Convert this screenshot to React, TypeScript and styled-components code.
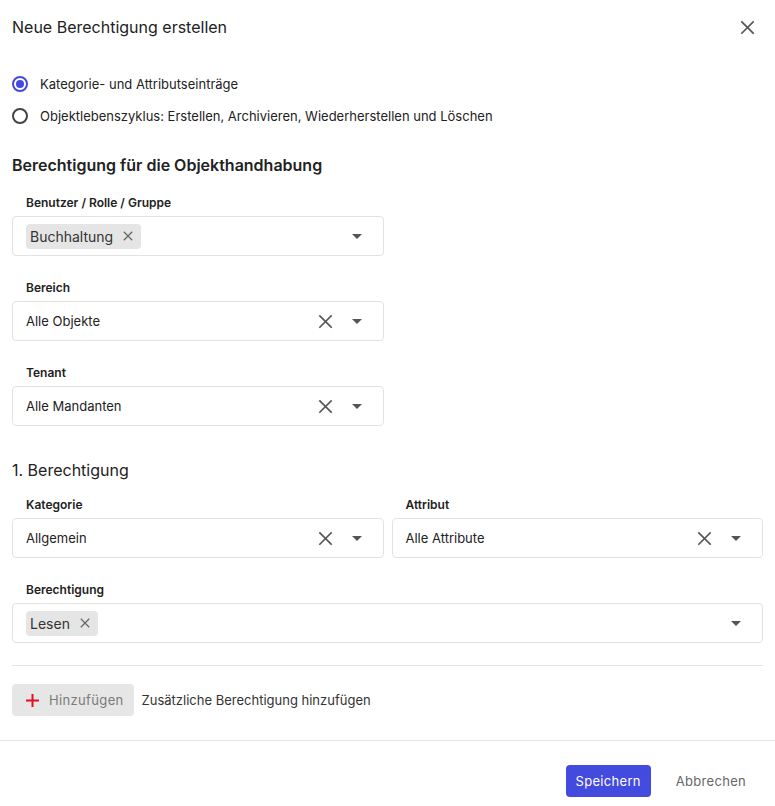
import React from 'react';
import styled, { createGlobalStyle } from 'styled-components';

const GlobalStyle = createGlobalStyle`
  html, body {
    margin: 0;
    padding: 0;
    background: #ffffff;
    font-family: Inter, "Noto Sans", sans-serif;
    color: #222;
  }
  * { box-sizing: border-box; }
`;

const Dialog = styled.div`
  width: 775px;
  height: 806px;
  display: flex;
  flex-direction: column;
  background: #fff;
`;

const Header = styled.div`
  height: 54px;
  padding: 0 20px 0 12px;
  display: flex;
  align-items: center;
  justify-content: space-between;
`;

const Title = styled.h2`
  margin: 0;
  font-size: 16px;
  font-weight: 400;
  color: #222;
`;

const IconButton = styled.button`
  border: none;
  background: none;
  padding: 0;
  width: 16px;
  height: 16px;
  display: flex;
  align-items: center;
  justify-content: center;
  cursor: pointer;
`;

const Body = styled.div`
  padding: 14px 12px 0;
  display: flex;
  flex-direction: column;
`;

const RadioGroup = styled.div`
  display: flex;
  flex-direction: column;
`;

const RadioRow = styled.label`
  height: 32px;
  display: flex;
  align-items: center;
  gap: 12px;
  font-size: 13px;
  color: #222;
  cursor: pointer;
`;

const RadioCircle = styled.span<{ $checked?: boolean }>`
  width: 16px;
  height: 16px;
  border-radius: 50%;
  border: 2px solid ${({ $checked }) => ($checked ? '#4349dd' : '#444')};
  display: flex;
  align-items: center;
  justify-content: center;
  &::after {
    content: '';
    width: 8px;
    height: 8px;
    border-radius: 50%;
    background: ${({ $checked }) => ($checked ? '#4349dd' : 'transparent')};
  }
`;

const SectionHeading = styled.h3`
  margin: 23px 0 0;
  font-size: 16px;
  line-height: 20px;
  font-weight: 600;
  color: #222;
`;

const SubHeading = styled.h3`
  margin: 34px 0 0;
  font-size: 16px;
  line-height: 20px;
  font-weight: 400;
  color: #222;
`;

const FieldRow = styled.div<{ $top?: number }>`
  display: grid;
  grid-template-columns: 1fr 1fr;
  gap: 8px;
  margin-top: ${({ $top }) => $top ?? 24}px;
`;

const Field = styled.div<{ $span?: boolean }>`
  display: flex;
  flex-direction: column;
  grid-column: ${({ $span }) => ($span ? '1 / 3' : 'auto')};
`;

const Label = styled.div`
  font-size: 12px;
  line-height: 16px;
  font-weight: 600;
  color: #222;
  padding-left: 14px;
  margin-bottom: 5px;
`;

const SelectBox = styled.div`
  height: 40px;
  border: 1px solid #e2e2e2;
  border-radius: 4px;
  display: flex;
  align-items: center;
  padding: 0 21px 0 13px;
  background: #fff;
`;

const SelectValue = styled.div`
  flex: 1;
  font-size: 13px;
  color: #222;
  display: flex;
  align-items: center;
`;

const Chip = styled.span`
  display: inline-flex;
  align-items: center;
  gap: 10px;
  height: 25px;
  padding: 0 8px 0 4px;
  background: #e5e5e5;
  border-radius: 4px;
  font-size: 14px;
  color: #333;
`;

const Adornments = styled.div`
  display: flex;
  align-items: center;
  gap: 19px;
`;

const Divider = styled.hr`
  border: none;
  border-top: 1px solid #e4e4e4;
  margin: 22px 0 0;
`;

const AddRow = styled.div`
  display: flex;
  align-items: center;
  gap: 8px;
  margin-top: 18px;
`;

const AddButton = styled.button`
  height: 32px;
  border: none;
  border-radius: 4px;
  background: #e6e6e6;
  display: flex;
  align-items: center;
  gap: 9px;
  padding: 0 10px 0 13px;
  font-family: inherit;
  font-size: 13px;
  color: #7a7a7a;
  letter-spacing: 0.35px;
  cursor: pointer;
`;

const AddHint = styled.span`
  font-size: 13px;
  color: #333;
`;

const Footer = styled.div`
  margin-top: 24px;
  border-top: 1px solid #e4e4e4;
  padding: 24px 15px 0 0;
  display: flex;
  justify-content: flex-end;
  gap: 11px;
`;

const Button = styled.button<{ $primary?: boolean }>`
  height: 32px;
  border: none;
  border-radius: 4px;
  padding: 0 ${({ $primary }) => ($primary ? 10 : 14)}px;
  background: ${({ $primary }) => ($primary ? '#434ade' : 'transparent')};
  color: ${({ $primary }) => ($primary ? '#fff' : '#666')};
  font-family: inherit;
  font-size: 13px;
  letter-spacing: 0.3px;
  cursor: pointer;
`;

const CloseIcon = ({ size = 16, stroke = '#555', width = 1.8 }: { size?: number; stroke?: string; width?: number }) => (
  <svg width={size} height={size} viewBox="0 0 16 16">
    <path d="M2 2 L14 14 M14 2 L2 14" stroke={stroke} strokeWidth={width} strokeLinecap="square" />
  </svg>
);

const Caret = () => (
  <svg width="10" height="5" viewBox="0 0 10 5">
    <path d="M0 0 L10 0 L5 5 Z" fill="#555" />
  </svg>
);

const Plus = () => (
  <svg width="15" height="15" viewBox="0 0 15 15">
    <path d="M7.5 1 V14 M1 7.5 H14" stroke="#e0101e" strokeWidth="2" />
  </svg>
);

type SelectProps = {
  value?: string;
  chip?: string;
  clearable?: boolean;
};

const Select: React.FC<SelectProps> = ({ value, chip, clearable }) => (
  <SelectBox>
    <SelectValue>
      {chip ? (
        <Chip>
          {chip}
          <CloseIcon size={10} stroke="#666" width={2} />
        </Chip>
      ) : (
        value
      )}
    </SelectValue>
    <Adornments>
      {clearable && <CloseIcon size={15} stroke="#555" width={1.7} />}
      <Caret />
    </Adornments>
  </SelectBox>
);

const App: React.FC = () => {
  return (
    <>
      <GlobalStyle />
      <Dialog>
        <Header>
          <Title>Neue Berechtigung erstellen</Title>
          <IconButton aria-label="Schließen">
            <CloseIcon size={15} stroke="#555" width={1.8} />
          </IconButton>
        </Header>

        <Body>
          <RadioGroup>
            <RadioRow>
              <RadioCircle $checked />
              Kategorie- und Attributseinträge
            </RadioRow>
            <RadioRow>
              <RadioCircle />
              Objektlebenszyklus: Erstellen, Archivieren, Wiederherstellen und Löschen
            </RadioRow>
          </RadioGroup>

          <SectionHeading>Berechtigung für die Objekthandhabung</SectionHeading>

          <FieldRow $top={20}>
            <Field>
              <Label>Benutzer / Rolle / Gruppe</Label>
              <Select chip="Buchhaltung" />
            </Field>
          </FieldRow>
          <FieldRow>
            <Field>
              <Label>Bereich</Label>
              <Select value="Alle Objekte" clearable />
            </Field>
          </FieldRow>
          <FieldRow>
            <Field>
              <Label>Tenant</Label>
              <Select value="Alle Mandanten" clearable />
            </Field>
          </FieldRow>

          <SubHeading>1. Berechtigung</SubHeading>

          <FieldRow $top={17}>
            <Field>
              <Label>Kategorie</Label>
              <Select value="Allgemein" clearable />
            </Field>
            <Field>
              <Label>Attribut</Label>
              <Select value="Alle Attribute" clearable />
            </Field>
          </FieldRow>
          <FieldRow>
            <Field $span>
              <Label>Berechtigung</Label>
              <Select chip="Lesen" />
            </Field>
          </FieldRow>

          <Divider />

          <AddRow>
            <AddButton>
              <Plus />
              Hinzufügen
            </AddButton>
            <AddHint>Zusätzliche Berechtigung hinzufügen</AddHint>
          </AddRow>
        </Body>

        <Footer>
          <Button $primary>Speichern</Button>
          <Button>Abbrechen</Button>
        </Footer>
      </Dialog>
    </>
  );
};

export default App;
